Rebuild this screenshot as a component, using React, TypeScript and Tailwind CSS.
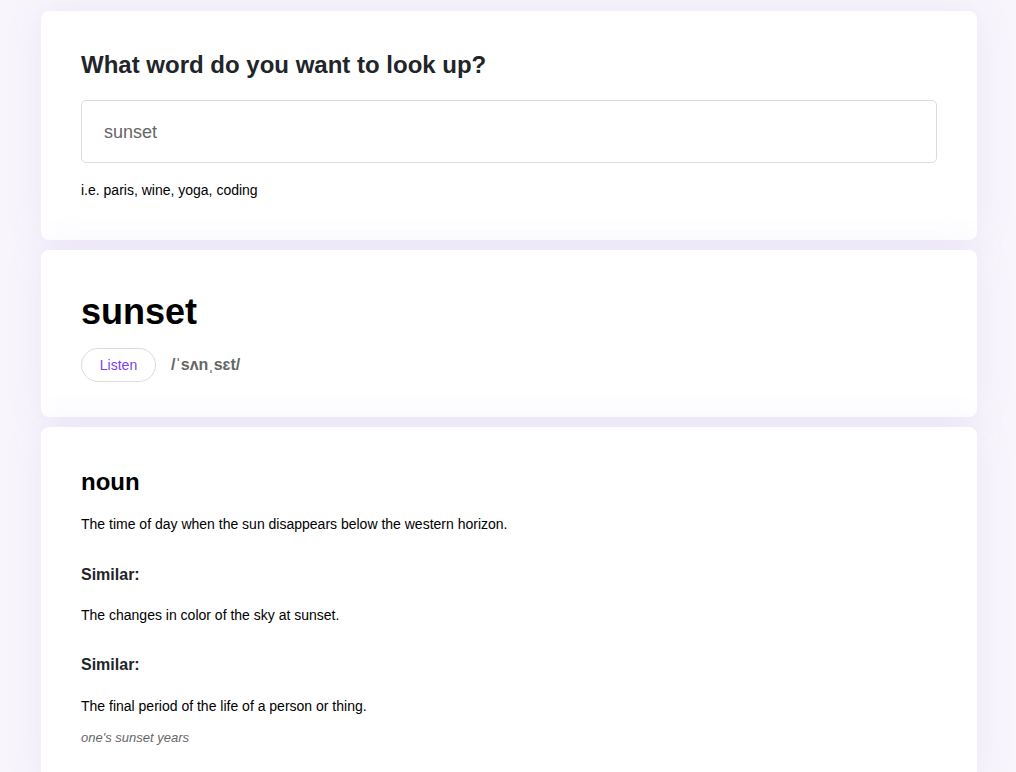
import React from "react";

export default function App() {
  return (
    <div className="min-h-[772px] bg-[#f8f6fc] pt-[11px] pb-10 font-['Liberation_Sans',Arial,sans-serif]">
      <div className="mx-auto flex w-[936px] translate-x-[1px] flex-col gap-[10px]">
        <section className="rounded-lg bg-white px-10 pt-[39px] pb-10 shadow-[0_0_40px_rgba(110,70,200,0.09)]">
          <h2 className="text-[24px] leading-[29px] font-bold text-[#212529]">What word do you want to look up?</h2>
          <input
            defaultValue="sunset"
            className="mt-[21px] block h-[63px] w-full rounded-[5px] border border-[#dcdcdc] px-[22px] pt-[2px] text-[18px] text-[#666] outline-none"
          />
          <p className="mt-[17px] text-[14px] leading-[20px] text-black">i.e. paris, wine, yoga, coding</p>
        </section>

        <section className="rounded-lg bg-white px-10 pt-10 pb-[35px] shadow-[0_0_40px_rgba(110,70,200,0.09)]">
          <h1 className="text-[36px] leading-[43px] font-bold text-black">sunset</h1>
          <div className="mt-[15px] flex items-center gap-[15px]">
            <button className="h-[34px] w-[75px] rounded-full border border-[#dcdcdc] bg-white text-[14px] text-[#7b3ff2]">
              Listen
            </button>
            <span className="text-[16px] font-bold text-[#666]">/ˈsʌnˌsɛt/</span>
          </div>
        </section>

        <section className="rounded-lg bg-white px-10 pt-10 pb-10 shadow-[0_0_40px_rgba(110,70,200,0.09)]">
          <h3 className="text-[24px] leading-[29px] font-bold text-black">noun</h3>
          <p className="mt-5 text-[14px] leading-[16px] text-black">
            The time of day when the sun disappears below the western horizon.
          </p>
          <h4 className="mt-[34px] text-[16px] leading-[18px] font-bold text-[#212529]">Similar:</h4>
          <p className="mt-[23px] text-[14px] leading-[16px] text-black">The changes in color of the sky at sunset.</p>
          <h4 className="mt-[33px] text-[16px] leading-[18px] font-bold text-[#212529]">Similar:</h4>
          <p className="mt-[24px] text-[14px] leading-[16px] text-black">The final period of the life of a person or thing.</p>
          <p className="mt-[16px] text-[13px] leading-[16px] text-[#666] italic">one's sunset years</p>
        </section>
      </div>
    </div>
  );
}
